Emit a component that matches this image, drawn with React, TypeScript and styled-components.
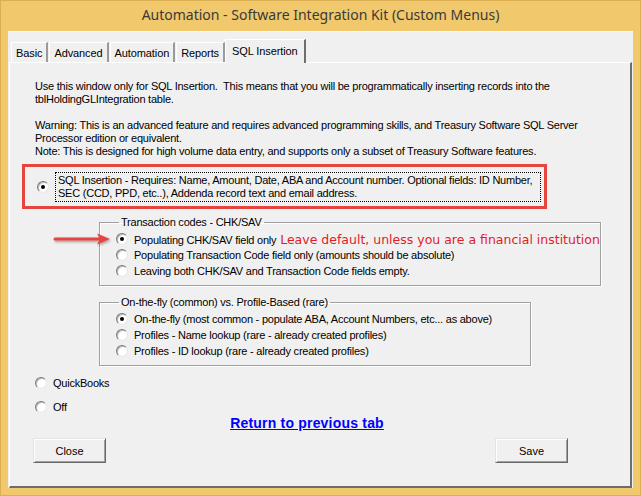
import React from 'react';
import styled, { createGlobalStyle } from 'styled-components';

const GlobalStyle = createGlobalStyle`
  html, body {
    margin: 0;
    padding: 0;
    background: #f0c96b;
  }
  * {
    box-sizing: border-box;
  }
`;

const ui = `'Liberation Sans', Arial, sans-serif`;

const Frame = styled.div`
  width: 641px;
  height: 496px;
  background: #f1c86b;
  border: 1px solid #dcaf52;
  display: flex;
  flex-direction: column;
`;

const TitleBar = styled.div`
  height: 30px;
  display: flex;
  align-items: center;
  justify-content: center;
  font-family: 'Noto Sans', 'Open Sans', sans-serif;
  font-size: 14px;
  color: #3a3a3a;
  padding-bottom: 3px;
`;

const Client = styled.div`
  flex: 1;
  margin: 0 7px 7px 7px;
  background: #f0f0f0;
  border-top: 1px solid #fafafa;
  display: flex;
  flex-direction: column;
  padding: 5px 0 0 1px;
`;

const TabStrip = styled.div`
  display: flex;
  align-items: flex-end;
  height: 25px;
  padding-left: 2px;
  position: relative;
  z-index: 1;
`;

const Tab = styled.div<{ $active?: boolean }>`
  height: ${(p) => (p.$active ? 24 : 20)}px;
  padding: 0 ${(p) => (p.$active ? 6 : 4)}px;
  margin-right: 1px;
  display: flex;
  align-items: center;
  font-family: ${ui};
  font-size: 11px;
  letter-spacing: -0.1px;
  color: #000;
  background: #f0f0f0;
  border-top: 1px solid #fff;
  border-left: 1px solid #fff;
  border-right: 2px solid ${(p) => (p.$active ? '#6e6e6e' : '#9a9a9a')};
  ${(p) => (p.$active ? 'margin-bottom: -1px; margin-left: -1px; padding-bottom: 2px;' : '')}
`;

const Panel = styled.div`
  flex: 1;
  margin-right: 1px;
  border-top: 1px solid #fff;
  border-left: 1px solid #fff;
  border-right: 2px solid #6e6e6e;
  border-bottom: 2px solid #6e6e6e;
  padding: 17px 0 0 25px;
  font-family: ${ui};
  font-size: 11px;
  letter-spacing: -0.23px;
  color: #000;
  position: relative;
`;

const Para = styled.p`
  margin: 0 0 13px 0;
  line-height: 13px;
  white-space: pre;
`;

const Callout = styled.div`
  margin: -7px 0 0 -13px;
  width: 525px;
  height: 45px;
  border: 3px solid #e5443f;
  display: flex;
  align-items: center;
  padding-left: 12px;
`;

const RadioDot = styled.span<{ $on?: boolean }>`
  flex: none;
  width: 12px;
  height: 12px;
  border-radius: 50%;
  background: #fff;
  border: 1px solid;
  border-color: #7a7a7a #e6e6e6 #e6e6e6 #7a7a7a;
  box-shadow: inset 1px 1px 0 #b5b5b5;
  display: flex;
  align-items: center;
  justify-content: center;
  &::after {
    content: '';
    width: 4px;
    height: 4px;
    border-radius: 50%;
    background: ${(p) => (p.$on ? '#000' : 'transparent')};
  }
`;

const Row = styled.div`
  display: flex;
  align-items: center;
  gap: 6px;
  height: 16px;
  white-space: nowrap;
`;

const FocusLabel = styled.div`
  margin-left: 6px;
  padding: 1px 2px;
  border: 1px dotted #000;
  line-height: 13px;
  width: 486px;
`;

const Group = styled.fieldset<{ $top: number }>`
  margin: ${(p) => p.$top}px 0 0 64px;
  width: 432px;
  padding: 2px 0 6px 16px;
  border: 1px solid #a0a0a0;
  box-shadow: 1px 1px 0 #fff, inset 1px 1px 0 #fff;
`;

const Legend = styled.legend`
  padding: 0 2px;
  margin-left: 3px;
  font-size: 11px;
  line-height: 13px;
`;

const Note = styled.span`
  font-family: 'DejaVu Sans', Verdana, sans-serif;
  font-size: 12.5px;
  letter-spacing: 0;
  color: #e21b2a;
  margin-left: 1px;
`;

const Arrow = styled.svg`
  position: absolute;
  left: 34px;
  top: 169px;
`;

const Plain = styled.div`
  margin: 9px 0 0 0;
  display: flex;
  flex-direction: column;
  gap: 8px;
`;

const LinkRow = styled.div`
  display: flex;
  justify-content: center;
  margin-top: 0;
  margin-right: 51px;
`;

const Link = styled.a`
  font-family: ${ui};
  font-weight: bold;
  font-size: 14px;
  letter-spacing: 0.2px;
  color: #0000ff;
  text-decoration: underline;
  cursor: pointer;
`;

const ButtonBar = styled.div`
  display: flex;
  justify-content: space-between;
  margin: 7px 0 0 -2px;
  width: 535px;
`;

const Button = styled.button`
  width: 73px;
  height: 25px;
  background: #f0f0f0;
  border: 1px solid;
  border-color: #e3e3e3 #696969 #696969 #e3e3e3;
  box-shadow: inset 1px 1px 0 #fff, inset -1px -1px 0 #a0a0a0;
  font-family: ${ui};
  font-size: 11px;
  color: #000;
  padding: 0;
`;

const Radio = ({ on, children }: { on?: boolean; children: React.ReactNode }) => (
  <Row>
    <RadioDot $on={on} />
    <span>{children}</span>
  </Row>
);

export default function App() {
  return (
    <>
      <GlobalStyle />
      <Frame>
        <TitleBar>Automation - Software Integration Kit (Custom Menus)</TitleBar>
        <Client>
          <TabStrip>
            <Tab>Basic</Tab>
            <Tab>Advanced</Tab>
            <Tab>Automation</Tab>
            <Tab>Reports</Tab>
            <Tab $active>SQL Insertion</Tab>
          </TabStrip>
          <Panel>
            <Para>
              {'Use this window only for SQL Insertion.  This means that you will be programmatically inserting records into the\ntblHoldingGLIntegration table.'}
            </Para>
            <Para>
              {'Warning: This is an advanced feature and requires advanced programming skills, and Treasury Software SQL Server\nProcessor edition or equivalent.\nNote: This is designed for high volume data entry, and supports only a subset of Treasury Software features.'}
            </Para>
            <Callout>
              <RadioDot $on />
              <FocusLabel>
                SQL Insertion - Requires: Name, Amount, Date, ABA and Account number. Optional fields: ID Number,
                SEC (CCD, PPD, etc..), Addenda record text and email address.
              </FocusLabel>
            </Callout>
            <Group $top={7}>
              <Legend>Transaction codes - CHK/SAV</Legend>
              <Radio on>
                Populating CHK/SAV field only <Note>Leave default, unless you are a financial institution</Note>
              </Radio>
              <Radio>Populating Transaction Code field only (amounts should be absolute)</Radio>
              <Radio>Leaving both CHK/SAV and Transaction Code fields empty.</Radio>
            </Group>
            <Group $top={10}>
              <Legend>On-the-fly (common) vs. Profile-Based (rare)</Legend>
              <Radio on>On-the-fly (most common - populate ABA, Account Numbers, etc... as above)</Radio>
              <Radio>Profiles - Name lookup (rare - already created profiles)</Radio>
              <Radio>Profiles - ID lookup (rare - already created profiles)</Radio>
            </Group>
            <Plain>
              <Radio>QuickBooks</Radio>
              <Radio>Off</Radio>
            </Plain>
            <LinkRow>
              <Link>Return to previous tab</Link>
            </LinkRow>
            <ButtonBar>
              <Button>Close</Button>
              <Button>Save</Button>
            </ButtonBar>
            <Arrow width="70" height="16" viewBox="0 0 70 16">
              <defs>
                <filter id="sh" x="-20%" y="-50%" width="140%" height="200%">
                  <feDropShadow dx="1" dy="1.5" stdDeviation="1" floodColor="#000" floodOpacity="0.35" />
                </filter>
              </defs>
              <g filter="url(#sh)">
                <line x1="11" y1="7" x2="56" y2="7" stroke="#e5443f" strokeWidth="3" strokeLinecap="round" />
                <polygon points="66,7 53,1.5 56,7 53,12.5" fill="#e5443f" />
              </g>
            </Arrow>
          </Panel>
        </Client>
      </Frame>
    </>
  );
}
